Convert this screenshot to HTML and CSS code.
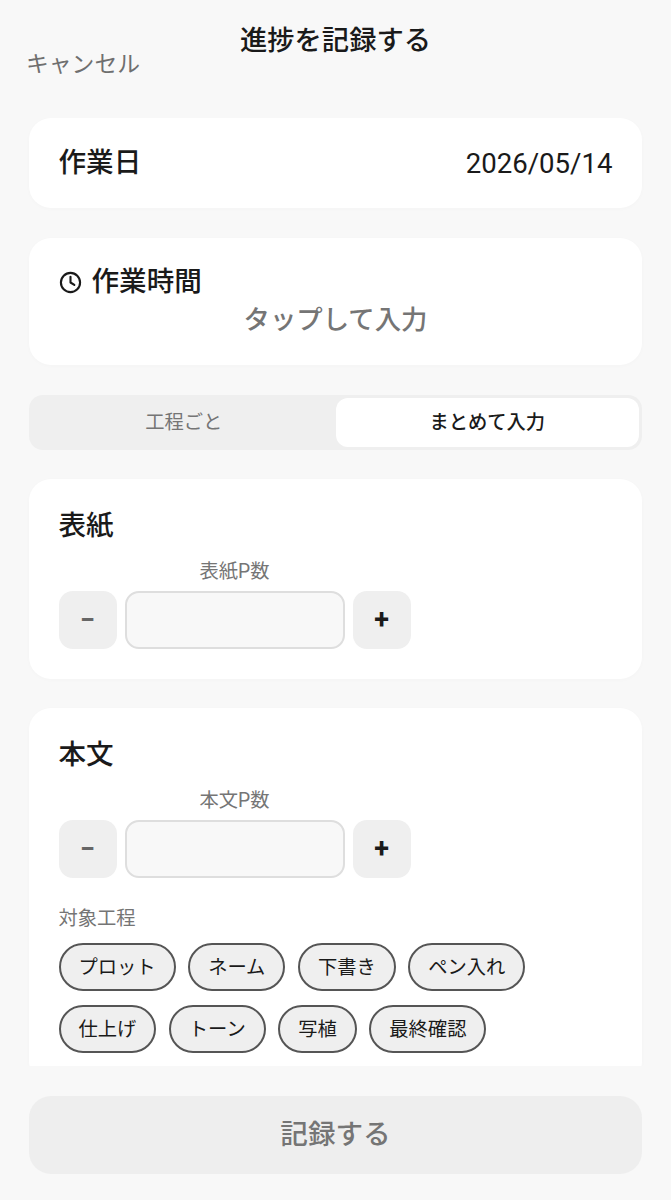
FILE: index.html
```html
<!DOCTYPE html>
<html lang="ja">

<head>
    <meta charset="UTF-8">
    <meta name="viewport" content="width=device-width, initial-scale=1.0">
    <title>進捗を記録する</title>
    <link rel="stylesheet" href="styles.css">
</head>

<body>
    <div class="page">
        <div class="header">
            <span class="cancel">キャンセル</span>
            <h1 class="page-title">進捗を記録する</h1>
        </div>

        <div class="content">
            <!-- 作業日 -->
            <div class="card date-card">
                <span class="card-label">作業日</span>
                <span class="date-value">2026/05/14</span>
            </div>

            <!-- 作業時間 -->
            <div class="card time-card">
                <div class="time-label">
                    <svg class="clock" viewBox="0 0 24 24" fill="none" stroke="#1a1a1a" stroke-width="2.2"
                        stroke-linecap="round" stroke-linejoin="round">
                        <circle cx="12" cy="12" r="10"></circle>
                        <path d="M12 6v6l4 2.5"></path>
                    </svg>
                    <span class="card-label">作業時間</span>
                </div>
                <div class="time-placeholder">タップして入力</div>
            </div>

            <!-- 入力モード -->
            <div class="segment">
                <div class="segment-item">工程ごと</div>
                <div class="segment-item active">まとめて入力</div>
            </div>

            <!-- 表紙 -->
            <div class="card section-card">
                <h2 class="card-label section-title">表紙</h2>
                <div class="stepper-label">表紙P数</div>
                <div class="stepper">
                    <div class="step-btn minus">−</div>
                    <div class="step-input"></div>
                    <div class="step-btn">+</div>
                </div>
            </div>

            <!-- 本文 -->
            <div class="card section-card">
                <h2 class="card-label section-title">本文</h2>
                <div class="stepper-label">本文P数</div>
                <div class="stepper">
                    <div class="step-btn minus">−</div>
                    <div class="step-input"></div>
                    <div class="step-btn">+</div>
                </div>
                <div class="chips-label">対象工程</div>
                <div class="chips">
                    <span class="chip">プロット</span>
                    <span class="chip">ネーム</span>
                    <span class="chip">下書き</span>
                    <span class="chip">ペン入れ</span>
                    <span class="chip">仕上げ</span>
                    <span class="chip">トーン</span>
                    <span class="chip">写植</span>
                    <span class="chip">最終確認</span>
                </div>
            </div>
        </div>

        <div class="footer">
            <div class="submit">記録する</div>
        </div>
    </div>
</body>

</html>
```

FILE: styles.css
```css
* {
    box-sizing: border-box;
}

body {
    margin: 0;
    background: #f8f8f8;
    color: #1a1a1a;
    font-family: Roboto, "Noto Sans CJK JP", sans-serif;
}

.page {
    display: flex;
    flex-direction: column;
    height: 1200px;
    overflow: hidden;
}

.header {
    display: grid;
    grid-template-columns: 1fr auto 1fr;
    height: 118px;
    padding: 22px 26px 0;
    align-items: start;
}

.cancel {
    margin-top: 24px;
    font-size: 22.8px;
    line-height: 38px;
    color: #6f6f6f;
}

.page-title {
    margin: 0;
    font-size: 27.3px;
    font-weight: 500;
    line-height: 38px;
}

.content {
    flex: 1;
    min-height: 0;
    overflow: hidden;
    display: flex;
    flex-direction: column;
    gap: 29px;
    padding: 0 29px;
}

.card {
    flex: none;
    background: #fff;
    border-radius: 22px;
    padding: 0 29.5px;
    box-shadow: 0 1px 4px rgba(0, 0, 0, 0.02);
}

.card-label {
    margin: 0;
    font-size: 27.6px;
    font-weight: 500;
    line-height: 38px;
}

.date-card {
    display: flex;
    justify-content: space-between;
    align-items: center;
    height: 90px;
    margin-bottom: 1px;
}

.date-value {
    font-size: 27.6px;
}

.time-card {
    height: 127px;
    margin-bottom: 1px;
    padding-top: 25px;
}

.time-label {
    display: flex;
    align-items: center;
    gap: 10px;
}

.clock {
    width: 23px;
    height: 23px;
    margin-top: 1px;
}

.time-placeholder {
    font-size: 26.4px;
    font-weight: 500;
    line-height: 38px;
    text-align: center;
    color: #757575;
}

.segment {
    flex: none;
    display: flex;
    height: 55px;
    padding: 3px;
    background: #efefef;
    border-radius: 14px;
}

.segment-item {
    flex: 1;
    display: flex;
    align-items: center;
    justify-content: center;
    padding-bottom: 3px;
    font-size: 19.3px;
    color: #757575;
}

.segment-item.active {
    background: #fff;
    border-radius: 12px;
    color: #1a1a1a;
    font-weight: 500;
}

.section-card {
    padding-top: 28px;
    padding-bottom: 30px;
}

.section-title {
    line-height: 38px;
}

.stepper-label {
    width: 352px;
    margin-top: 13px;
    font-size: 19.3px;
    line-height: 28px;
    text-align: center;
    color: #757575;
}

.stepper {
    display: flex;
    gap: 8px;
    margin-top: 5px;
}

.step-btn {
    display: flex;
    align-items: center;
    justify-content: center;
    width: 58px;
    height: 58px;
    background: #efefef;
    border-radius: 14px;
    font-size: 27px;
    font-weight: 700;
    color: #1a1a1a;
}

.step-btn.minus {
    color: #666;
}

.step-input {
    width: 220px;
    height: 58px;
    background: #f8f8f8;
    border: 2px solid #dedede;
    border-radius: 14px;
}

.chips-label {
    margin-top: 27px;
    font-size: 19.3px;
    line-height: 28px;
    color: #757575;
}

.chips {
    display: flex;
    flex-wrap: wrap;
    gap: 14px 12.5px;
    width: 480px;
    margin-top: 10px;
}

.chip {
    display: flex;
    align-items: center;
    height: 48px;
    padding: 0 18px 2px;
    background: #efefef;
    border: 2px solid #555;
    border-radius: 24px;
    font-size: 19.3px;
    color: #1a1a1a;
}

.footer {
    flex: none;
    height: 134px;
    padding: 30px 29px 26px;
    background: #f8f8f8;
}

.submit {
    display: flex;
    align-items: center;
    justify-content: center;
    height: 78px;
    padding-bottom: 6px;
    background: #eee;
    border-radius: 22px;
    font-size: 27.6px;
    font-weight: 500;
    color: #757575;
}
```
